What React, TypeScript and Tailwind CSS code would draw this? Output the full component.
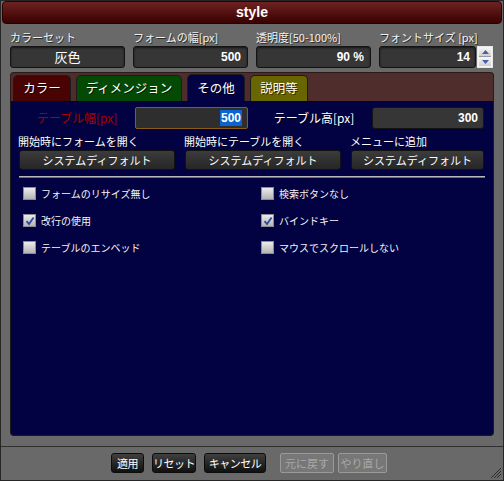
import { useState } from "react";

const jp = "font-['Noto_Sans_CJK_JP','Noto_Sans',sans-serif]";
const shadow = "[text-shadow:1px_1px_0_rgba(0,0,0,0.6)]";

const topFields = [
  { label: "カラーセット", value: "灰色", align: "center" },
  { label: "フォームの幅[px]", value: "500", align: "right" },
  { label: "透明度[50-100%]", value: "90 %", align: "right" },
];

const tabs = [
  { label: "カラー", w: "w-[58px]", bg: "bg-[#4a0303]" },
  { label: "ディメンジョン", w: "w-[106px]", bg: "bg-[#044a04]" },
  { label: "その他", w: "w-[58px]", bg: "bg-[#020244]" },
  { label: "説明等", w: "w-[58px]", bg: "bg-[#686600]" },
];

const openers = [
  { label: "開始時にフォームを開く", w: "w-[156px]" },
  { label: "開始時にテーブルを開く", w: "w-[156px]" },
  { label: "メニューに追加", w: "w-[133px]" },
];

const checks = [
  { label: "フォームのリサイズ無し", on: false },
  { label: "検索ボタンなし", on: false },
  { label: "改行の使用", on: true },
  { label: "バインドキー", on: true },
  { label: "テーブルのエンベッド", on: false },
  { label: "マウスでスクロールしない", on: false },
];

function Checkbox({ on }: { on: boolean }) {
  return (
    <span className="w-[13px] h-[13px] shrink-0 border border-[#8c8c8c] bg-gradient-to-b from-[#ececec] to-[#b4b4b4] flex items-center justify-center">
      {on && (
        <svg width="10" height="10" viewBox="0 0 10 10">
          <path d="M1.5 5.2 L4 8 L8.6 1.5" fill="none" stroke="#2d4a9a" strokeWidth="1.8" />
        </svg>
      )}
    </span>
  );
}

export default function App() {
  const [active] = useState(2);

  return (
    <div className={`relative w-[504px] h-[481px] bg-[#696969] border border-[#262626] flex flex-col ${jp}`}>
      <div className="mx-[1px] h-[23px] rounded-[4px] border border-[#2a0000] bg-gradient-to-b from-[#6f2222] to-[#3a0202] flex items-center justify-center">
        <span className="text-white font-bold text-[14px] font-['Liberation_Sans',sans-serif]">style</span>
      </div>

      <div className="flex gap-[8px] pl-[9px] mt-[6px]">
        {topFields.map((f) => (
          <div key={f.label} className="flex flex-col w-[115px]">
            <span className={`h-[16px] leading-[14px] text-[11px] text-[#f2f2f2] ${shadow}`}>{f.label}</span>
            <div
              className={`h-[22px] rounded-[3px] border border-[#141414] bg-[#363636] shadow-[inset_0_1px_2px_rgba(0,0,0,0.6)] flex items-center px-[6px] text-white ${
                f.align === "center" ? "justify-center text-[13px]" : "justify-end font-bold text-[12px] font-['Liberation_Sans',sans-serif]"
              }`}
            >
              {f.value}
            </div>
          </div>
        ))}
        <div className="flex flex-col w-[114px]">
          <span className={`h-[16px] leading-[14px] text-[11px] text-[#f2f2f2] whitespace-nowrap ${shadow}`}>フォントサイズ [px]</span>
          <div className="flex gap-[1px]">
            <div className="w-[97px] h-[22px] rounded-[3px] border border-[#141414] bg-[#363636] shadow-[inset_0_1px_2px_rgba(0,0,0,0.6)] flex items-center justify-end px-[5px] text-white font-bold text-[12px] font-['Liberation_Sans',sans-serif]">
              14
            </div>
            <div className="w-[16px] h-[22px] border border-[#e8e8e8] bg-[#f4f4f4] flex flex-col">
              <div className="flex-1 m-[1px] bg-gradient-to-b from-[#f4f4f4] to-[#cfcfcf] flex items-center justify-center border-b border-[#9a9a9a]">
                <svg width="7" height="4" viewBox="0 0 7 4">
                  <path d="M0 4 L3.5 0 L7 4 Z" fill="#4a5fa8" />
                </svg>
              </div>
              <div className="flex-1 m-[1px] mt-0 bg-gradient-to-b from-[#f4f4f4] to-[#cfcfcf] flex items-center justify-center">
                <svg width="7" height="4" viewBox="0 0 7 4">
                  <path d="M0 0 L3.5 4 L7 0 Z" fill="#4a5fa8" />
                </svg>
              </div>
            </div>
          </div>
        </div>
      </div>

      <div className="mx-[9px] mt-[4px] flex flex-col">
        <div className="h-[29px] rounded-t-[4px] border border-b-0 border-[#2a1a1a] bg-[#4f2d2d] flex items-end gap-[5px] pl-[2px]">
          {tabs.map((t, i) => (
            <div
              key={t.label}
              className={`${t.w} ${t.bg} h-[26px] rounded-t-[5px] border border-b-0 border-[#1c1c1c] flex items-center justify-center text-white text-[12.5px] ${shadow} ${
                i === active ? "h-[27px]" : ""
              }`}
            >
              {t.label}
            </div>
          ))}
        </div>

        <div className="h-[335px] rounded-b-[4px] border border-t-0 border-[#1a1a1a] bg-[#020242] pl-[8px] pt-[6px] text-white">
          <div className="flex gap-[8px]">
            <div className="flex items-center">
              <span className="w-[116px] text-center text-[12px] text-[#a80000]">テーブル幅[px]</span>
              <div className="w-[113px] h-[22px] rounded-[2px] border-[1.5px] border-[#8a5c1c] bg-[#2e2e2e] flex items-center justify-end pr-[5px]">
                <span className="bg-[#0b63d0] text-white font-bold text-[12px] leading-[16px] px-[1px] font-['Liberation_Sans',sans-serif]">500</span>
              </div>
            </div>
            <div className="flex items-center">
              <span className={`w-[116px] text-center text-[12px] ${shadow}`}>テーブル高[px]</span>
              <div className="w-[112px] h-[22px] rounded-[3px] border border-[#141414] bg-[#363636] flex items-center justify-end pr-[5px] font-bold text-[12px] font-['Liberation_Sans',sans-serif]">
                300
              </div>
            </div>
          </div>

          <div className="flex gap-[10px] mt-[6px]">
            {openers.map((o) => (
              <div key={o.label} className={`flex flex-col ${o.w}`}>
                <span className={`h-[15px] leading-[13px] text-[11px] -ml-[1px] whitespace-nowrap ${shadow}`}>{o.label}</span>
                <div className="h-[20px] rounded-[3px] border border-[#121212] bg-gradient-to-b from-[#3c3c3c] to-[#262626] flex items-center justify-center text-[11px]">
                  システムディフォルト
                </div>
              </div>
            ))}
          </div>

          <div className="mt-[6px] w-[466px] h-[2px] bg-[#b8b8b8] border-b border-[#6a6a7a]" />

          <div className="grid grid-cols-[238px_1fr] pl-[4px] mt-[9px]">
            {checks.map((c) => (
              <div key={c.label} className="h-[27px] flex items-start gap-[5px]">
                <Checkbox on={c.on} />
                <span className="text-[10px] leading-[13px] text-[#f4f4f4] whitespace-nowrap">{c.label}</span>
              </div>
            ))}
          </div>
        </div>
      </div>

      <div className="mt-[10px] border-t border-[#2e2e2e]" />

      <div className="mt-[6px] flex justify-center pr-[6px] text-[11px] whitespace-nowrap">
        <div className="flex gap-[8px]">
          {[
            { l: "適用", w: "w-[33px]" },
            { l: "リセット", w: "w-[44px]" },
            { l: "キャンセル", w: "w-[62px]" },
          ].map((b) => (
            <div
              key={b.l}
              className={`${b.w} h-[20px] rounded-[3px] border border-[#0c0c0c] bg-gradient-to-b from-[#404040] to-[#111111] text-white flex items-center justify-center tracking-[-0.5px]`}
            >
              {b.l}
            </div>
          ))}
        </div>
        <div className="flex gap-[4px] ml-[14px]">
          {[
            { l: "元に戻す", w: "w-[54px]" },
            { l: "やり直し", w: "w-[49px]" },
          ].map((b) => (
            <div
              key={b.l}
              className={`${b.w} h-[20px] rounded-[2px] border border-[#9a9a9a] bg-[#777777] text-[#a8a8a8] flex items-center justify-center`}
            >
              {b.l}
            </div>
          ))}
        </div>
      </div>

      <svg className="absolute right-[1px] bottom-[1px]" width="12" height="12" viewBox="0 0 12 12">
        <path d="M1 11 L11 1 M4 11 L11 4 M7 11 L11 7" stroke="#2c2c2c" strokeWidth="1" />
      </svg>
    </div>
  );
}
